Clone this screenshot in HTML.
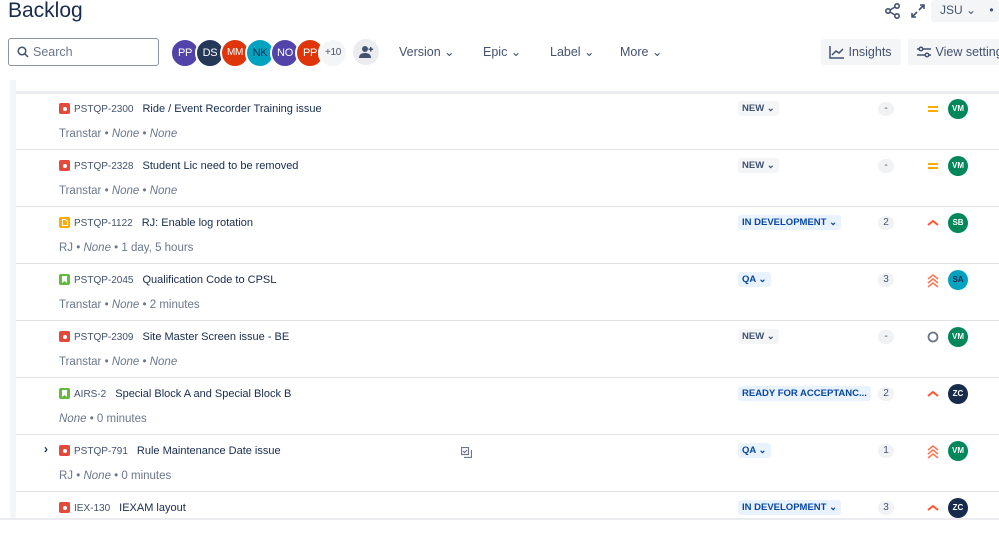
<!DOCTYPE html>
<html><head><meta charset="utf-8"><style>
*{box-sizing:border-box;margin:0;padding:0}
body{width:999px;height:520px;overflow:hidden;background:#fff;font-family:"Liberation Sans",sans-serif;color:#172b4d;position:relative}
.a{position:absolute}
h1{position:absolute;left:8px;top:-1px;font-size:21px;font-weight:500;color:#172b4d}
.search{left:8px;top:38px;width:151px;height:28px;border:1px solid #8993a4;border-radius:3px;font-size:12.5px;color:#6b778c;padding:6px 0 0 24px}
.av{position:absolute;width:26px;height:26px;border-radius:50%;color:#fff;font-size:11px;text-align:center;line-height:26px;border:2px solid #fff;box-sizing:content-box;margin:-2px;letter-spacing:-0.3px}
.fl{font-size:12.5px;color:#42526e;top:44px}
.btn{background:#f4f5f7;border-radius:3px;height:26px;font-size:12.5px;color:#42526e;top:39px;line-height:26px}
.vline{left:10px;top:80px;width:6px;height:440px;background:#f4f5f7}
.sep{left:16px;right:0;height:2px;background:#ebecf0}
.row{position:absolute;left:16px;right:0;height:57px}
.ic{position:absolute;left:43px;top:9px;width:11px;height:11px;border-radius:2px}
.key{position:absolute;left:58px;top:8px;font-size:10px;color:#42526e;line-height:14px}
.ti{font-size:11px;color:#172b4d;margin-left:9px}
.meta{position:absolute;left:43px;top:34px;font-size:11.5px;color:#6b778c}
.meta i{font-style:italic}
.st{position:absolute;left:722px;top:7px;height:15px;border-radius:3px;font-size:9.5px;font-weight:bold;padding:0 4px;line-height:15px}
.new{background:#f4f5f7;color:#42526e}
.dev{background:#e9f2ff;color:#0747a6}
.est{position:absolute;left:862px;top:8px;width:16px;height:14px;border-radius:7px;background:#f1f2f4;font-size:10px;color:#42526e;text-align:center;line-height:14px}
.pr{position:absolute;left:910px;top:8px}
.u{position:absolute;left:932px;top:5px;width:20px;height:20px;border-radius:50%;color:#fff;font-size:8px;font-weight:bold;text-align:center;line-height:20px}
</style></head><body>
<h1>Backlog</h1>
<div class="a" style="left:884px;top:2px"><svg width="18" height="18" viewBox="0 0 18 18" fill="none" stroke="#42526e" stroke-width="1.6"><circle cx="13" cy="4" r="2.2"/><circle cx="4" cy="9" r="2.2"/><circle cx="13" cy="14" r="2.2"/><path d="M6 8l5-3M6 10l5 3"/></svg></div>
<div class="a" style="left:910px;top:3px"><svg width="16" height="16" viewBox="0 0 16 16" fill="none" stroke="#42526e" stroke-width="1.6"><path d="M9 7l5-5M10 2h4v4M7 9l-5 5M2 10v4h4"/></svg></div>
<div class="a" style="left:931px;top:0;width:68px;height:22px;background:#f4f5f7;border-radius:3px;font-size:12px;color:#42526e;padding:3px 0 0 9px">JSU &#8964;&nbsp;&nbsp;&nbsp;&nbsp;•</div>
<div class="a search"><svg class="a" style="left:8px;top:7px" width="12" height="12" viewBox="0 0 12 12" fill="none" stroke="#42526e" stroke-width="1.5"><circle cx="5" cy="5" r="3.8"/><path d="M8 8l3 3"/></svg>Search</div>
<div class="av" style="left:172px;top:40px;background:#5243aa">PP</div>
<div class="av" style="left:197px;top:40px;background:#253858">DS</div>
<div class="av" style="left:222px;top:40px;background:#de350b;font-size:10px">MM</div>
<div class="av" style="left:247px;top:40px;background:#00a3bf;color:#172b4d">NK</div>
<div class="av" style="left:272px;top:40px;background:#5243aa">NO</div>
<div class="av" style="left:297px;top:40px;background:#de350b">PP</div>
<div class="av" style="left:320px;top:40px;background:#f4f5f7;color:#42526e;font-size:10px">+10</div>
<div class="a" style="left:353px;top:39px;width:26px;height:26px;border-radius:50%;background:#ebecf0"><svg class="a" style="left:6px;top:6px" width="15" height="14" viewBox="0 0 15 14" fill="#42526e"><circle cx="6" cy="4" r="3"/><path d="M0 13c0-4 3-5 6-5s6 1 6 5z"/><path d="M11 2h1.5v1.5H14V5h-1.5v1.5H11V5H9.5V3.5H11z"/></svg></div>
<div class="a fl" style="left:399px">Version &#8964;</div>
<div class="a fl" style="left:483px">Epic &#8964;</div>
<div class="a fl" style="left:550px">Label &#8964;</div>
<div class="a fl" style="left:620px">More &#8964;</div>
<div class="a btn" style="left:821px;width:80px;padding-left:8px"><svg style="vertical-align:-3px" width="16" height="14" viewBox="0 0 16 14" fill="none" stroke="#42526e" stroke-width="1.5"><path d="M1 1v12h14M3 10l4-4 3 2 4-4"/></svg> Insights</div>
<div class="a btn" style="left:908px;width:100px;padding-left:8px;white-space:nowrap"><svg style="vertical-align:-3px" width="16" height="14" viewBox="0 0 16 14" fill="none" stroke="#42526e" stroke-width="1.5"><path d="M1 4h14M1 10h14"/><circle cx="5" cy="4" r="1.8" fill="#fff"/><circle cx="11" cy="10" r="1.8" fill="#fff"/></svg> View settings</div>
<div class="a vline"></div>
<div class="a sep" style="top:91px;height:3px"></div>
<div class="a sep" style="top:149px;height:1px;background:#dfe1e6"></div>
<div class="a sep" style="top:206px;height:1px;background:#dfe1e6"></div>
<div class="a sep" style="top:263px;height:1px;background:#dfe1e6"></div>
<div class="a sep" style="top:320px;height:1px;background:#dfe1e6"></div>
<div class="a sep" style="top:377px;height:1px;background:#dfe1e6"></div>
<div class="a sep" style="top:434px;height:1px;background:#dfe1e6"></div>
<div class="a sep" style="top:491px;height:1px;background:#dfe1e6"></div>
<div class="a sep" style="top:518px;height:2px;left:0"></div>

<div class="row" style="top:94px">
<div class="ic" style="background:#e5493a"><div style="position:absolute;left:3.5px;top:3.5px;width:4px;height:4px;border-radius:50%;background:#fff"></div></div>
<div class="key">PSTQP-2300<span class="ti">Ride / Event Recorder Training issue</span></div>
<div class="meta">Transtar • <i>None</i> • <i>None</i></div>
<div class="st new">NEW ⌄</div><div class="est">-</div>
<div class="pr"><svg width="14" height="14"><path d="M2 5h10M2 9h10" stroke="#ffab00" stroke-width="2"/></svg></div>
<div class="u" style="background:#00875a">VM</div></div>
<div class="row" style="top:151px">
<div class="ic" style="background:#e5493a"><div style="position:absolute;left:3.5px;top:3.5px;width:4px;height:4px;border-radius:50%;background:#fff"></div></div>
<div class="key">PSTQP-2328<span class="ti">Student Lic need to be removed</span></div>
<div class="meta">Transtar • <i>None</i> • <i>None</i></div>
<div class="st new">NEW ⌄</div><div class="est">-</div>
<div class="pr"><svg width="14" height="14"><path d="M2 5h10M2 9h10" stroke="#ffab00" stroke-width="2"/></svg></div>
<div class="u" style="background:#00875a">VM</div></div>
<div class="row" style="top:208px">
<div class="ic" style="background:#ffab00"><svg style="position:absolute;left:3px;top:2px" width="6" height="7"><path d="M0.5 .5h3l2 2v4h-5z" fill="none" stroke="#fff"/></svg></div>
<div class="key">PSTQP-1122<span class="ti">RJ: Enable log rotation</span></div>
<div class="meta">RJ • <i>None</i> • 1 day, 5 hours</div>
<div class="st dev">IN DEVELOPMENT ⌄</div><div class="est">2</div>
<div class="pr"><svg width="14" height="14"><path d="M2 9l5-4 5 4" fill="none" stroke="#ff5630" stroke-width="2"/></svg></div>
<div class="u" style="background:#00875a">SB</div></div>
<div class="row" style="top:265px">
<div class="ic" style="background:#63ba3c"><svg style="position:absolute;left:3px;top:2px" width="6" height="7"><path d="M0 0h5v7l-2.5-2L0 7z" fill="#fff"/></svg></div>
<div class="key">PSTQP-2045<span class="ti">Qualification Code to CPSL</span></div>
<div class="meta">Transtar • <i>None</i> • 2 minutes</div>
<div class="st dev">QA ⌄</div><div class="est">3</div>
<div class="pr"><svg width="14" height="16"><path d="M2 6l5-4 5 4M2 10l5-4 5 4M2 14l5-4 5 4" fill="none" stroke="#ff7452" stroke-width="1.5"/></svg></div>
<div class="u" style="background:#00a3bf;color:#172b4d">SA</div></div>
<div class="row" style="top:322px">
<div class="ic" style="background:#e5493a"><div style="position:absolute;left:3.5px;top:3.5px;width:4px;height:4px;border-radius:50%;background:#fff"></div></div>
<div class="key">PSTQP-2309<span class="ti">Site Master Screen issue - BE</span></div>
<div class="meta">Transtar • <i>None</i> • <i>None</i></div>
<div class="st new">NEW ⌄</div><div class="est">-</div>
<div class="pr"><svg width="14" height="14"><circle cx="7" cy="7" r="4.5" fill="none" stroke="#6b778c" stroke-width="1.8"/></svg></div>
<div class="u" style="background:#00875a">VM</div></div>
<div class="row" style="top:379px">
<div class="ic" style="background:#63ba3c"><svg style="position:absolute;left:3px;top:2px" width="6" height="7"><path d="M0 0h5v7l-2.5-2L0 7z" fill="#fff"/></svg></div>
<div class="key">AIRS-2<span class="ti">Special Block A and Special Block B</span></div>
<div class="meta"><i>None</i> • 0 minutes</div>
<div class="st dev">READY FOR ACCEPTANC...</div><div class="est">2</div>
<div class="pr"><svg width="14" height="14"><path d="M2 9l5-4 5 4" fill="none" stroke="#ff5630" stroke-width="2"/></svg></div>
<div class="u" style="background:#172b4d">ZC</div></div>
<div class="row" style="top:436px">
<div class="a" style="left:28px;top:6px;font-size:12px;font-weight:bold;color:#172b4d">›</div>
<div class="ic" style="background:#e5493a"><div style="position:absolute;left:3.5px;top:3.5px;width:4px;height:4px;border-radius:50%;background:#fff"></div></div>
<div class="key">PSTQP-791<span class="ti">Rule Maintenance Date issue</span></div>
<div class="a" style="left:445px;top:9px"><svg width="11" height="11" fill="none" stroke="#6b778c" stroke-width="1.2"><rect x=".5" y=".5" width="7" height="7"/><path d="M3 10.5h7.5V3"/><path d="M2 4l1.5 1.5L6 3"/></svg></div>
<div class="meta">RJ • <i>None</i> • 0 minutes</div>
<div class="st dev">QA ⌄</div><div class="est">1</div>
<div class="pr"><svg width="14" height="16"><path d="M2 6l5-4 5 4M2 10l5-4 5 4M2 14l5-4 5 4" fill="none" stroke="#ff7452" stroke-width="1.5"/></svg></div>
<div class="u" style="background:#00875a">VM</div></div>
<div class="row" style="top:493px">
<div class="ic" style="background:#e5493a"><div style="position:absolute;left:3.5px;top:3.5px;width:4px;height:4px;border-radius:50%;background:#fff"></div></div>
<div class="key">IEX-130<span class="ti">IEXAM layout</span></div>
<div class="st dev">IN DEVELOPMENT ⌄</div><div class="est">3</div>
<div class="pr"><svg width="14" height="14"><path d="M2 9l5-4 5 4" fill="none" stroke="#ff5630" stroke-width="2"/></svg></div>
<div class="u" style="background:#172b4d">ZC</div></div>
</body></html>
